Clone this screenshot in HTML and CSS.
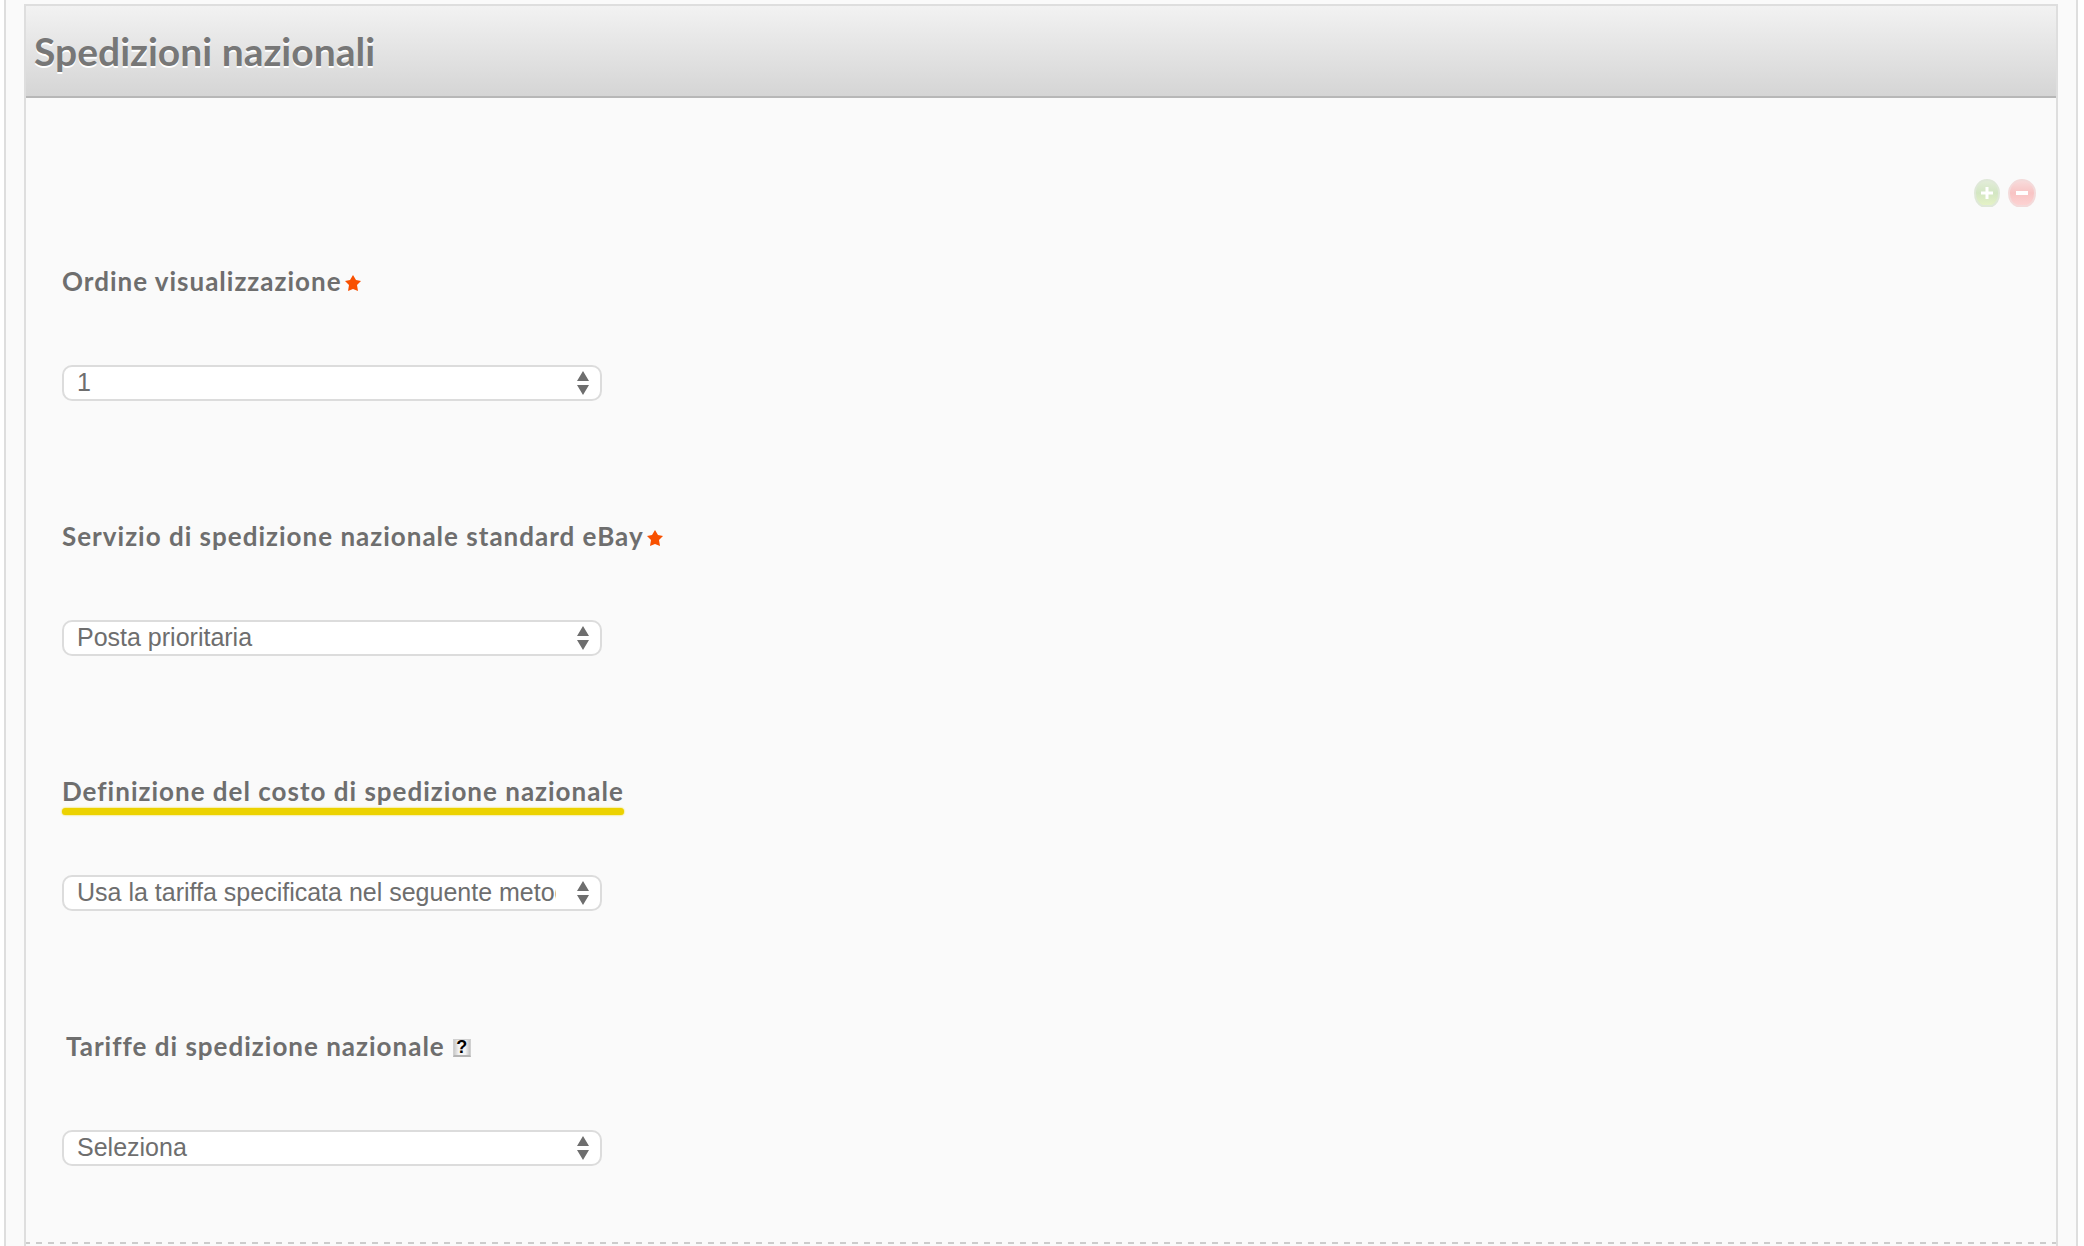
FILE: index.html
```html
<!DOCTYPE html>
<html lang="it">
<head>
    <meta charset="UTF-8">
    <title>Spedizioni nazionali</title>
    <link rel="stylesheet" href="styles.css">
</head>

<body>
<div class="page">
    <section class="panel">
        <h2 class="title">Spedizioni nazionali</h2>

        <form class="service">
            <div class="tools">
                <button type="button" class="tool" aria-label="Aggiungi">
                    <svg width="28" height="28" viewBox="0 0 28 28">
                        <defs>
                            <linearGradient id="green" x1="0" y1="0" x2="0" y2="1">
                                <stop offset="0" stop-color="#e3edda"/>
                                <stop offset="0.5" stop-color="#d3e6c3"/>
                                <stop offset="1" stop-color="#e6f3c6"/>
                            </linearGradient>
                        </defs>
                        <path d="M13 1C20 1 25 7 25 14C25 20 22 25 18 27H8C4 25 1 20 1 14C1 7 6 1 13 1Z" fill="url(#green)" stroke="#dfe8d8" stroke-width="2"/>
                        <path d="M13 8V20M7 14H19" stroke="#fff" stroke-width="3"/>
                    </svg>
                </button>
                <button type="button" class="tool" aria-label="Rimuovi">
                    <svg width="28" height="28" viewBox="0 0 28 28">
                        <defs>
                            <linearGradient id="red" x1="0" y1="0" x2="0" y2="1">
                                <stop offset="0" stop-color="#f8dcdc"/>
                                <stop offset="0.5" stop-color="#f8c4c4"/>
                                <stop offset="1" stop-color="#fdd3d3"/>
                            </linearGradient>
                        </defs>
                        <path d="M14 1C21 1 27 7 27 14C27 20 24 25 19 27H9C4 25 1 20 1 14C1 7 7 1 14 1Z" fill="url(#red)" stroke="#f3dada" stroke-width="2"/>
                        <path d="M8 14H20" stroke="#fff" stroke-width="4"/>
                    </svg>
                </button>
            </div>

            <div class="field">
                <div class="caption">
                    <label for="order">Ordine visualizzazione</label>
                    <svg class="star" width="18" height="18" viewBox="0 0 18 18"><path d="M9 1L12 6L17 7L13 11L14 17L9 15L4 17L5 11L1 7L6 6Z"/></svg>
                </div>
                <div class="picker">
                    <select id="order">
                        <option selected>1</option>
                        <option>2</option>
                        <option>3</option>
                    </select>
                    <svg class="arrows" width="12" height="24" viewBox="0 0 12 24"><path d="M6 0L12 10H0ZM0 14H12L6 24Z"/></svg>
                </div>
            </div>

            <div class="field">
                <div class="caption">
                    <label for="carrier">Servizio di spedizione nazionale standard eBay</label>
                    <svg class="star" width="18" height="18" viewBox="0 0 18 18"><path d="M9 1L12 6L17 7L13 11L14 17L9 15L4 17L5 11L1 7L6 6Z"/></svg>
                </div>
                <div class="picker">
                    <select id="carrier">
                        <option selected>Posta prioritaria</option>
                    </select>
                    <svg class="arrows" width="12" height="24" viewBox="0 0 12 24"><path d="M6 0L12 10H0ZM0 14H12L6 24Z"/></svg>
                </div>
            </div>

            <div class="field">
                <div class="caption">
                    <label for="cost" class="marked">Definizione del costo di spedizione nazionale</label>
                </div>
                <div class="picker">
                    <select id="cost">
                        <option selected>Usa la tariffa specificata nel seguente metodo</option>
                    </select>
                    <svg class="arrows" width="12" height="24" viewBox="0 0 12 24"><path d="M6 0L12 10H0ZM0 14H12L6 24Z"/></svg>
                </div>
            </div>

            <div class="field">
                <div class="caption indent">
                    <label for="rates">Tariffe di spedizione nazionale</label>
                    <button type="button" class="help">?</button>
                </div>
                <div class="picker">
                    <select id="rates">
                        <option selected>Seleziona</option>
                    </select>
                    <svg class="arrows" width="12" height="24" viewBox="0 0 12 24"><path d="M6 0L12 10H0ZM0 14H12L6 24Z"/></svg>
                </div>
            </div>
        </form>
        <div class="divider"></div>
    </section>
</div>
</body>
</html>
```
FILE: styles.css
```css
* {
    box-sizing: border-box;
    margin: 0;
    padding: 0;
}

body {
    background: #fff;
    color: #6e6e6e;
    font-family: Lato, "Liberation Sans", sans-serif;
}

.page {
    display: flex;
    min-height: 100vh;
    margin: 0 6px 0 4px;
    padding: 4px 18px 0;
    background: #fafafa;
    border: solid #dedede;
    border-width: 0 2px;
}

.panel {
    flex: 1;
    border: 2px solid #dedede;
    border-bottom: none;
}

.title {
    height: 92px;
    padding: 0 8px;
    background: linear-gradient(#f2f2f2, #d5d5d5);
    border-bottom: 2px solid #b7b7b7;
    color: #777;
    font-size: 39px;
    font-weight: bold;
    line-height: 90px;
    text-shadow: 0 2px 0 #fff;
}

.service {
    padding: 81px 20px 76px 36px;
}

.tools {
    display: flex;
    justify-content: flex-end;
    gap: 6px;
    margin-bottom: 58px;
}

.tool {
    width: 28px;
    height: 28px;
    background: none;
    border: none;
}

.tool svg {
    display: block;
}

.field + .field {
    margin-top: 119px;
}

.caption {
    display: flex;
    align-items: center;
    height: 32px;
    margin-bottom: 68px;
    font-size: 26px;
    font-weight: bold;
    line-height: 32px;
    letter-spacing: 1px;
}

.indent {
    padding-left: 4px;
}

.star {
    margin: 4px 0 0 2px;
    fill: #f85000;
}

/* highlighter line under the label */
.marked {
    position: relative;
}

.marked::after {
    content: "";
    position: absolute;
    left: 0;
    right: 0;
    bottom: -8px;
    height: 7px;
    border-radius: 4px;
    background: #ecd200;
    box-shadow: 0 0 2px #ecd200;
}

.help {
    width: 18px;
    height: 18px;
    margin: 4px 0 0 8px;
    background: linear-gradient(to right, #c8c8c8, #f4f4f4 30%, #f4f4f4 70%, #c0c0c0);
    border: 1px solid #d0d0d0;
    border-bottom: 2px solid #b4b4b4;
    color: #000;
    font: bold 18px/15px "Liberation Sans", sans-serif;
}

.picker {
    position: relative;
    width: 540px;
    max-width: 100%;
}

.picker select {
    display: block;
    width: 100%;
    height: 36px;
    padding: 0 44px 2px 13px;
    appearance: none;
    background: #fff;
    border: 2px solid #dcdcdc;
    border-radius: 10px;
    color: #6e6e6e;
    font: 25px/30px "Liberation Sans", Arial, sans-serif;
}

.arrows {
    position: absolute;
    top: 6px;
    right: 13px;
    fill: #6e6e6e;
    pointer-events: none;
}

.divider {
    height: 2px;
    background: repeating-linear-gradient(to right, #ccc 0, #ccc 4px, transparent 4px, transparent 10px, #ccc 10px, #ccc 12px);
}
```
